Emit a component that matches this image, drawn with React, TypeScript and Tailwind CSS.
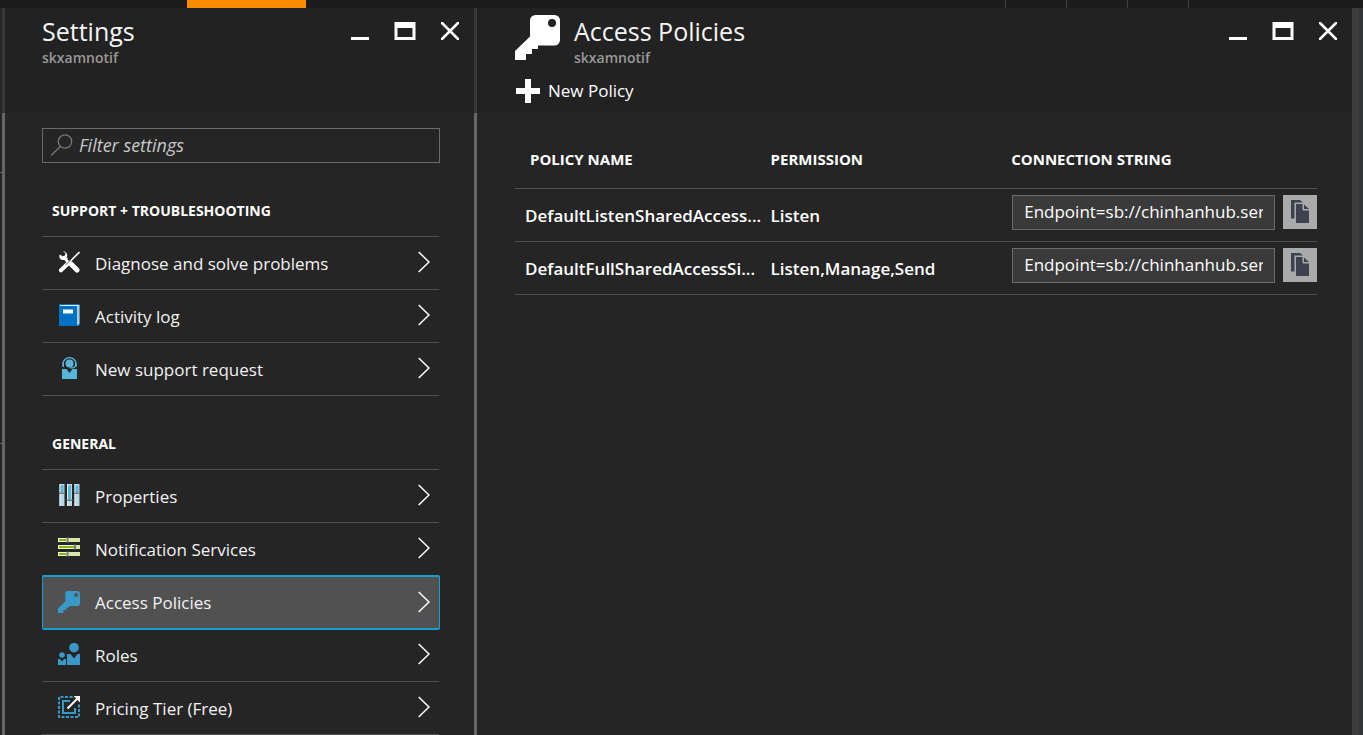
import type { ReactNode } from "react";

function KeyIcon({ className }: { className: string }) {
  return (
    <svg viewBox="0 0 45 45" className={className} aria-hidden="true">
      <path
        fill="currentColor"
        fillRule="evenodd"
        d="M20.5 0H39.5a5.5 5.5 0 0 1 5.5 5.5V25a5.5 5.5 0 0 1-5.5 5.5H23V34H17V39H11V45H0V36L15 21.5V5.5A5.5 5.5 0 0 1 20.5 0ZM37 4a4 4 0 1 0 0 8a4 4 0 0 0 0-8Z"
      />
    </svg>
  );
}

function ToolsIcon() {
  return (
    <svg viewBox="0 0 22 22" className="size-[22px]" aria-hidden="true">
      <path d="M21.5 1 11.5 11" stroke="#fff" strokeWidth="1.6" fill="none" />
      <path
        fill="#fff"
        d="M4.8.3 7.5 2 7 4.6 4.6 5.2 1.8 3.4C.2 6.8 2.8 9.7 6 8.8l1.7 1.5L10 8.100 8.8 6.6C10.2 3.3 8 .2 4.8.3Z"
      />
      <path d="M13 13 19 19" stroke="#fff" strokeWidth="5" strokeLinecap="round" fill="none" />
      <path d="M8 9 13 14" stroke="#fff" strokeWidth="2.5" fill="none" />
      <path d="M11 11.500 3 19.300" stroke="#fff" strokeWidth="4" strokeLinecap="round" fill="none" />
      <path d="M12.800 8.800 7.500 14" stroke="#252525" strokeWidth=".7" fill="none" />
    </svg>
  );
}

function LogIcon() {
  return (
    <svg viewBox="0 0 22 22" className="size-[22px]" aria-hidden="true">
      <path fill="#0072c6" d="M1 0H21.500V21.500L20 22H1Z" />
      <path fill="#a9cce8" d="M2 1H21.500V20L19 21.500V2H2Z" />
      <path fill="#e8f2fa" d="M2.500 1H20V2H2.500Z" />
      <path fill="#fff" d="M5 5.500H15V9.500H5Z" />
    </svg>
  );
}

function SupportIcon() {
  return (
    <svg viewBox="0 0 22 22" className="size-[22px]" aria-hidden="true">
      <circle cx="11.500" cy="6.500" r="4" fill="#59b4d9" />
      <path d="M5 8.500V6.500A6.500 5.800 0 0 1 18 6.500V8.500L15.500 10.800H12" stroke="#59b4d9" strokeWidth="1.300" fill="none" />
      <path d="M4.500 5.500H6V10H4.500ZM17 5.500H18.500V10H17Z" fill="#59b4d9" />
      <path d="M4 12H8.500L11.500 16 14.500 12H19V22H4Z" fill="#59b4d9" />
    </svg>
  );
}

function PropertiesIcon() {
  return (
    <svg viewBox="0 0 22 22" className="size-[22px]" aria-hidden="true">
      <path fill="#b8d8e6" d="M1.500 0h5v22h-5zM9 0h5v22H9zM16.500 0h5v22h-5z" />
      <path fill="#e4f1f7" d="M1.500 0h1v22h-1zM9 0h1v22H9zM16.500 0h1v22h-1z" />
      <path fill="#59b4d9" d="M2.500 1.500h3v7h-3zM10 1.500h3v14h-3zM17.500 1.500h3v7h-3z" />
      <path fill="#7a7a7a" d="M1 8.500h6V10H1zM8.500 15.500h6V17h-6zM16 8.500h6V10h-6z" />
    </svg>
  );
}

function ServicesIcon() {
  return (
    <svg viewBox="0 0 22 22" className="size-[22px]" aria-hidden="true">
      <path fill="#d3e8a4" d="M0 1h22v4H0zM0 8h22v4H0zM0 15h22v4H0z" />
      <path fill="#f0f6e2" d="M0 1h9v4H0zM0 8h17v4H0zM0 15h9v4H0z" />
      <path fill="#7fba00" d="M1 2h7v2H1zM1 9h15v2H1zM1 16h7v2H1z" />
      <path fill="#7a7a7a" d="M8.500.500H10.500v5h-2zM16 7.500h2v5h-2zM8.500 14.500H10.500v5h-2z" />
    </svg>
  );
}

function RolesIcon() {
  return (
    <svg viewBox="0 0 22 22" className="size-[22px]" aria-hidden="true">
      <g fill="#3999c6">
        <circle cx="16" cy="4.700" r="4.800" />
        <circle cx="4" cy="12" r="2.800" />
        <path d="M9 11h3.500L16 15.500 19.500 11H22v11H9ZM0 16h2l2 2.500L6 16h2v6H0Z" />
      </g>
    </svg>
  );
}

function PricingIcon() {
  return (
    <svg viewBox="0 0 22 22" className="size-[22px]" fill="none" aria-hidden="true">
      <path d="M14.500 1H1V21H21V8" stroke="#3999c6" strokeWidth="2" strokeDasharray="3 1.500" />
      <path d="M12 5H5V17H17V12" stroke="#3999c6" strokeWidth="2" />
      <path d="M9.500 12.500 19 3" stroke="#fff" strokeWidth="2" />
      <path d="M15.500 0H22V6.500Z" fill="#fff" />
    </svg>
  );
}

function CopyIcon() {
  return (
    <svg viewBox="0 0 18 23" className="h-[23px] w-[18px]" fill="#3c434f" aria-hidden="true">
      <path d="M0 0H9L12 2.500H3.500V18.500H0Z" />
      <path d="M5 4H12V10H18V23H5Z" />
      <path d="M13 4.500 18 9H13Z" />
      <path d="M12 4V10H18" stroke="#aaa" strokeWidth="1" fill="none" />
    </svg>
  );
}

function WindowButtons({ name }: { name: string }) {
  return (
    <div className="flex shrink-0 gap-[25px] pt-[7px] text-white">
      <button type="button" aria-label={"Minimize " + name} className="h-[18px] w-[18px]">
        <svg viewBox="0 0 18 18" className="size-[18px]" aria-hidden="true">
          <path d="M0 15h18v3H0z" fill="currentColor" />
        </svg>
      </button>
      <button type="button" aria-label={"Maximize " + name} className="h-[18px] w-[22px]">
        <svg viewBox="0 0 22 18" className="h-[18px] w-[22px]" aria-hidden="true">
          <path fillRule="evenodd" d="M.500 0h21v18H.500zM3.500 6v9h15V6z" fill="currentColor" />
        </svg>
      </button>
      <button type="button" aria-label={"Close " + name} className="h-[18px] w-[18px]">
        <svg viewBox="0 0 18 18" className="size-[18px]" aria-hidden="true">
          <path d="M1 1 17 17M17 1 1 17" stroke="currentColor" strokeWidth="2.500" strokeLinecap="round" />
        </svg>
      </button>
    </div>
  );
}

type Item = { label: string; icon: ReactNode; selected?: boolean };

const sections: { title: string; items: Item[] }[] = [
  {
    title: "SUPPORT + TROUBLESHOOTING",
    items: [
      { label: "Diagnose and solve problems", icon: <ToolsIcon /> },
      { label: "Activity log", icon: <LogIcon /> },
      { label: "New support request", icon: <SupportIcon /> },
    ],
  },
  {
    title: "GENERAL",
    items: [
      { label: "Properties", icon: <PropertiesIcon /> },
      { label: "Notification Services", icon: <ServicesIcon /> },
      { label: "Access Policies", icon: <KeyIcon className="size-[22px] text-[#3999c6]" />, selected: true },
      { label: "Roles", icon: <RolesIcon /> },
      { label: "Pricing Tier (Free)", icon: <PricingIcon /> },
    ],
  },
];

const policies = [
  { name: "DefaultListenSharedAccess...", permission: "Listen" },
  { name: "DefaultFullSharedAccessSi...", permission: "Listen,Manage,Send" },
];

function SettingsRow({ item }: { item: Item }) {
  return (
    <li
      className={
        item.selected
          ? "-my-px -mr-px h-[55px] rounded-[2px] border-x border-y-2 border-[#149fd0] bg-[#515151] pr-[9px] pl-[15px]"
          : "h-[53px] border-b border-[#505050] pr-[9px] pl-4"
      }
    >
      <a href="#" className="flex h-full items-center pb-[2px]">
        <span className="shrink-0">{item.icon}</span>
        <span className="ml-[15px] flex-1 pt-[3px] text-[17px] leading-6 text-[#f2f2f2]">{item.label}</span>
        <svg viewBox="0 0 12 22" className="h-[22px] w-3" fill="none" aria-hidden="true">
          <path d="M.7 1 11 11 .7 21" stroke="#fff" strokeWidth="1.5" />
        </svg>
      </a>
    </li>
  );
}

export default function App() {
  return (
    <div className="flex h-screen flex-col overflow-hidden bg-[#252525] font-['Open_Sans','Noto_Sans',sans-serif] text-white">
      <div className="flex h-2 shrink-0 justify-between bg-[#1b1b1b]">
        <div className="ml-[187px] w-[119px] bg-[#ff8c00]" />
        <div className="mr-[174px] flex">
          <div className="w-[61px] border-l border-[#404040]" />
          <div className="w-[61px] border-l border-[#404040]" />
          <div className="w-[61px] border-l border-[#404040]" />
          <div className="w-px bg-[#404040]" />
        </div>
      </div>

      <div className="flex min-h-0 flex-1">
        <div className="flex w-[2px] shrink-0 flex-col pt-[164px]">
          <div className="h-px bg-[#666]" />
          <div className="mt-[270px] h-px bg-[#666]" />
        </div>

        <section className="flex w-[472px] shrink-0 flex-col">
          <header className="flex h-[105px] shrink-0 items-start justify-between border-l-[3px] border-[#383838] bg-[#222] pt-[7px] pr-[15px] pl-[37px]">
            <div>
              <h1 className="text-[25px] leading-8 text-[#f5f5f5]">Settings</h1>
              <p className="pt-[2px] text-sm leading-[18px] font-semibold text-[#999]">skxamnotif</p>
            </div>
            <WindowButtons name="Settings" />
          </header>
          <div className="flex-1 border-l-[3px] border-[#666] pt-[15px] pr-[34px] pl-[37px]">
            <label className="flex h-[35px] items-center border border-[#6b6b6b] pb-[2px] pl-2">
              <span className="sr-only">Filter settings</span>
              <svg viewBox="0 0 22 22" className="size-[22px] shrink-0" fill="none" stroke="#777" strokeWidth="1.3" aria-hidden="true">
                <circle cx="14" cy="7.500" r="6.700" />
                <path d="M9.300 12.500 0 21.500" />
              </svg>
              <input
                type="text"
                placeholder="Filter settings"
                className="ml-[6px] min-w-0 flex-1 bg-transparent text-lg leading-6 italic outline-none placeholder:text-[#c8c8c8]"
              />
            </label>
            {sections.map((section) => (
              <div key={section.title}>
                <h2 className="mr-px flex h-[74px] items-end border-b border-[#505050] pb-[15px] pl-[10px] text-sm leading-5 font-bold">
                  {section.title}
                </h2>
                <ul className="mr-px">
                  {section.items.map((item) => (
                    <SettingsRow key={item.label} item={item} />
                  ))}
                </ul>
              </div>
            ))}
          </div>
        </section>

        <section className="flex min-w-0 flex-1 flex-col">
          <header className="h-[105px] shrink-0 border-l-[3px] border-[#383838] bg-[#222] pt-[7px] pr-[15px] pl-[38px]">
            <div className="flex items-start justify-between">
              <div className="flex gap-[14px]">
                <KeyIcon className="size-[45px] text-white" />
                <div>
                  <h1 className="text-[25px] leading-8 text-[#f5f5f5]">Access Policies</h1>
                  <p className="pt-[2px] text-sm leading-[18px] font-semibold text-[#999]">skxamnotif</p>
                </div>
              </div>
              <WindowButtons name="Access Policies" />
            </div>
            <button type="button" className="mt-3 ml-px flex items-center gap-2 text-[17px] leading-6">
              <svg viewBox="0 0 24 24" className="size-6" fill="#fff" aria-hidden="true">
                <path d="M9 0h6v9h9v6h-9v9H9v-9H0V9h9z" />
              </svg>
              New Policy
            </button>
          </header>
          <div className="flex-1 border-l-[3px] border-[#666] pt-4 pr-[35px] pl-[38px]">
            <table className="w-full table-fixed border-separate border-spacing-0 text-left">
              <thead>
                <tr className="text-[15px] leading-5 [&>th]:h-[60px] [&>th]:border-b [&>th]:border-[#505050] [&>th]:pl-[15px] [&>th]:font-bold">
                  <th className="w-[30%]">POLICY NAME</th>
                  <th className="w-[30%]">PERMISSION</th>
                  <th className="w-[40%]">CONNECTION STRING</th>
                </tr>
              </thead>
              <tbody>
                {policies.map((policy) => (
                  <tr key={policy.name} className="text-[17px] leading-6 font-semibold whitespace-nowrap [&>td]:border-b [&>td]:border-[#505050]">
                    <td className="pt-[2px] pl-[10px]">{policy.name}</td>
                    <td className="pt-[2px] pl-[15px]">{policy.permission}</td>
                    <td className="pt-[6px] pb-[11px] pl-4">
                      <div className="flex items-start gap-2">
                        <input
                          type="text"
                          readOnly
                          aria-label={"Connection string for " + policy.name}
                          defaultValue="Endpoint=sb://chinhanhub.servicebus.windows.net/"
                          className="h-[35px] min-w-0 flex-1 border border-[#6b6b6b] bg-[#3a3a3a] px-[11px] pb-[2px] text-[17px] leading-6 font-normal text-white outline-none"
                        />
                        <button
                          type="button"
                          aria-label={"Copy connection string for " + policy.name}
                          className="flex size-[34px] items-center justify-center bg-[#aaa] pb-px"
                        >
                          <CopyIcon />
                        </button>
                      </div>
                    </td>
                  </tr>
                ))}
              </tbody>
            </table>
          </div>
        </section>

        <div className="w-[7px] shrink-0 bg-[#3d3d3e]" />
        <div className="w-1 shrink-0 bg-[#333435]" />
      </div>
    </div>
  );
}
